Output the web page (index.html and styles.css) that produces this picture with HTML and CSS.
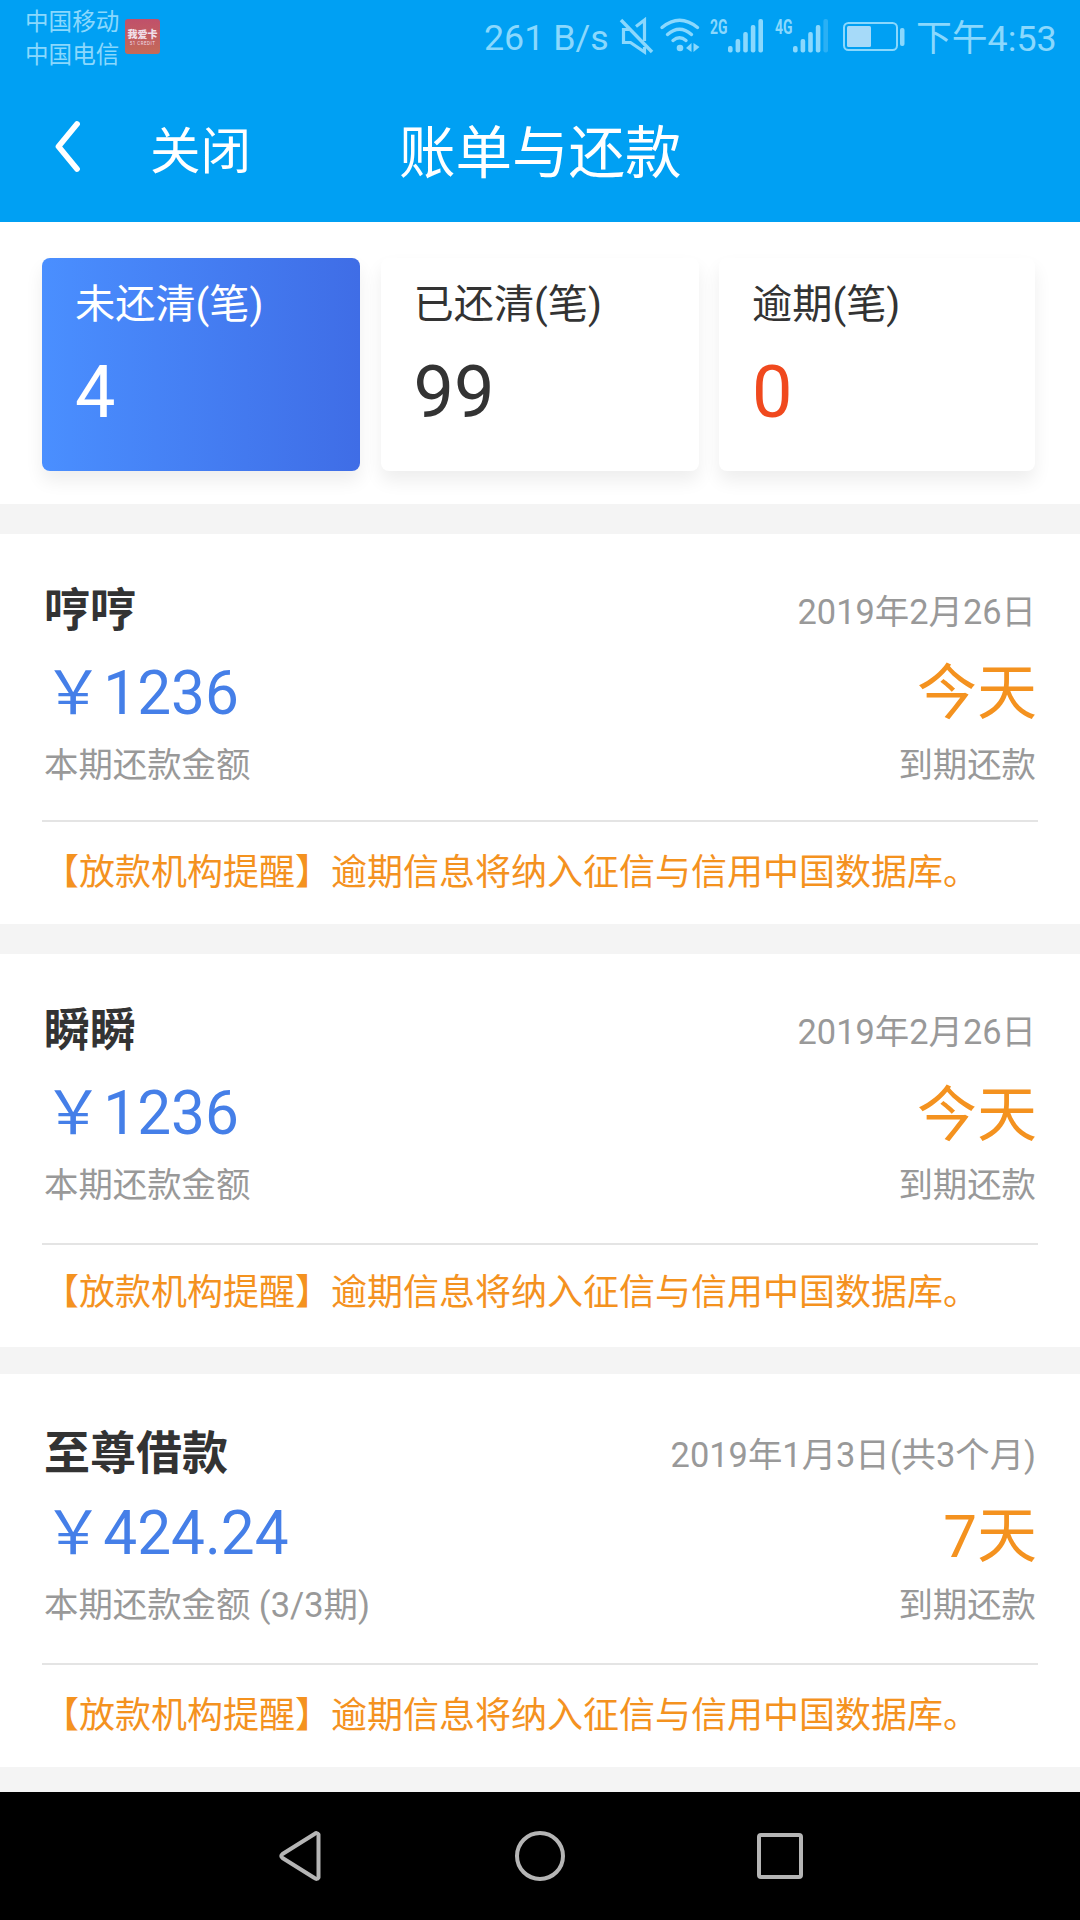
FILE: index.html
```html
<!DOCTYPE html>
<html lang="zh-CN">
<head>
<meta charset="utf-8">
<title>账单与还款</title>
<link rel="stylesheet" href="styles.css">
</head>
<body>
<div class="screen">
  <header class="header">
    <div class="status">
      <div class="carriers"><span>中国移动</span><span>中国电信</span></div>
      <div class="app-badge"><b>我爱卡</b><small>51 CREDIT</small></div>
      <div class="speed">261 B/s</div>
      <svg class="icon-mute" viewBox="0 0 36 38" width="36" height="38" fill="none" stroke="currentColor" stroke-width="3.2">
        <path d="M17 9.500L25.500 3V24M10 12.500H4.500V25.500H11.500L25.500 35V30"/>
        <path d="M2 3L33 35" stroke-width="3.400"/>
      </svg>
      <svg class="icon-wifi" viewBox="0 0 40 36" width="40" height="36" fill="none" stroke="currentColor" stroke-width="3.400" stroke-linecap="round">
        <path d="M2 9.500Q19.500 -5 37.500 9.500"/>
        <path d="M7.500 16.500Q19.500 6 31.500 16.500"/>
        <path d="M13 22.500Q19.500 17 26 22.500"/>
        <circle cx="20" cy="30" r="3.300" fill="currentColor" stroke="none"/>
        <path d="M31.500 25V34L26 30ZM33.500 25L39.500 29L33.500 34Z" fill="currentColor" stroke="none"/>
      </svg>
      <svg class="icon-signal" viewBox="0 0 55 36" width="55" height="36" fill="currentColor">
        <text x="0" y="16" class="net" textLength="17.500" lengthAdjust="spacingAndGlyphs">2G</text>
        <rect x="18" y="28" width="4.600" height="6.500" rx="2"/>
        <rect x="25.600" y="21" width="4.600" height="13.500" rx="2"/>
        <rect x="33.200" y="14" width="4.600" height="20.500" rx="2"/>
        <rect x="40.800" y="7" width="4.600" height="27.500" rx="2"/>
        <rect x="48.400" y="1" width="4.600" height="33.500" rx="2"/>
      </svg>
      <svg class="icon-signal second-sim" viewBox="0 0 55 36" width="55" height="36" fill="currentColor">
        <text x="0" y="16" class="net" textLength="17.500" lengthAdjust="spacingAndGlyphs">4G</text>
        <rect x="18" y="28" width="4.600" height="6.500" rx="2"/>
        <rect x="25.600" y="21" width="4.600" height="13.500" rx="2"/>
        <rect x="33.200" y="14" width="4.600" height="20.500" rx="2"/>
        <rect x="40.800" y="7" width="4.600" height="27.500" rx="2"/>
        <rect x="48.400" y="1" width="4.600" height="33.500" rx="2" opacity=".3"/>
      </svg>
      <svg class="icon-battery" viewBox="0 0 62 30" width="62" height="30" fill="currentColor">
        <rect x="1" y="1" width="53" height="27" rx="4.500" fill="none" stroke="currentColor" stroke-width="2"/>
        <rect x="4" y="4" width="24" height="21" rx="1.500" fill="#a6daf9"/>
        <rect x="57" y="6" width="4.500" height="18" rx="2"/>
      </svg>
      <div class="time">下午4:53</div>
    </div>
    <nav class="titlebar">
      <svg class="back" viewBox="0 0 26 54" width="26" height="54" fill="none" stroke="#fff" stroke-width="5.800" stroke-linecap="round" stroke-linejoin="round"><path d="M22 4L3.500 26.500L22 49"/></svg>
      <span class="close">关闭</span>
      <h1>账单与还款</h1>
    </nav>
  </header>

  <section class="stats">
    <div class="stat active"><span>未还清(笔)</span><strong>4</strong></div>
    <div class="stat"><span>已还清(笔)</span><strong>99</strong></div>
    <div class="stat overdue"><span>逾期(笔)</span><strong>0</strong></div>
  </section>

  <main class="bills">
    <article class="bill first">
      <div class="bill-body">
        <div class="loan"><h2>哼哼</h2><p class="amount">￥1236</p><p class="sub">本期还款金额</p></div>
        <div class="due"><p class="date">2019年2月26日</p><p class="days">今天</p><p class="sub">到期还款</p></div>
      </div>
      <p class="notice">【放款机构提醒】逾期信息将纳入征信与信用中国数据库。</p>
    </article>
    <article class="bill second">
      <div class="bill-body">
        <div class="loan"><h2>瞬瞬</h2><p class="amount">￥1236</p><p class="sub">本期还款金额</p></div>
        <div class="due"><p class="date">2019年2月26日</p><p class="days">今天</p><p class="sub">到期还款</p></div>
      </div>
      <p class="notice">【放款机构提醒】逾期信息将纳入征信与信用中国数据库。</p>
    </article>
    <article class="bill third">
      <div class="bill-body">
        <div class="loan"><h2>至尊借款</h2><p class="amount">￥424.24</p><p class="sub">本期还款金额 (3/3期)</p></div>
        <div class="due"><p class="date">2019年1月3日(共3个月)</p><p class="days">7天</p><p class="sub">到期还款</p></div>
      </div>
      <p class="notice">【放款机构提醒】逾期信息将纳入征信与信用中国数据库。</p>
    </article>
  </main>

  <footer class="navbar">
    <svg viewBox="0 0 52 52" width="52" height="52"><path d="M44.500 4.500V47.500Q43 50 40.500 48L8.500 28Q6 26 8.500 24L40.500 4Q43 2 44.500 4.500Z"/></svg>
    <svg viewBox="0 0 52 52" width="52" height="52"><circle cx="26" cy="26" r="23"/></svg>
    <svg viewBox="0 0 52 52" width="52" height="52"><rect x="5" y="5" width="42" height="42" rx="2"/></svg>
  </footer>
</div>
</body>
</html>
```
FILE: styles.css
```css
* { box-sizing: border-box; }
body {
  margin: 0;
  background: #f4f4f4;
  font-family: Roboto, "Noto Sans CJK SC", sans-serif;
  color: #333;
}
h1, h2, p { margin: 0; font-weight: 400; white-space: nowrap; }
.screen {
  width: 1080px;
  height: 1920px;
  overflow: hidden;
  display: flex;
  flex-direction: column;
}

/* header */
.header { height: 222px; flex: none; background: #00a0f3; color: #fff; }
.status {
  height: 76px;
  padding-left: 25px;
  display: flex;
  align-items: flex-start;
  color: #8ad8fd;
  white-space: nowrap;
}
.status svg { overflow: visible; flex: none; }
.carriers {
  width: 100px;
  padding-top: 6px;
  display: flex;
  flex-direction: column;
  font-size: 23.6px;
  line-height: 33px;
}
.app-badge {
  width: 35px;
  height: 35px;
  margin-top: 19px;
  padding-top: 9px;
  border-radius: 3px;
  background: linear-gradient(#c0506a, #c46a58);
  color: #f0dfe8;
  display: flex;
  flex-direction: column;
  align-items: center;
}
.app-badge b { font-size: 10px; line-height: 13px; font-weight: 900; }
.app-badge small { font-size: 4.5px; line-height: 5px; letter-spacing: .5px; }
.speed { width: 135px; margin-left: 324px; font-size: 35.8px; line-height: 76px; }
.icon-mute { margin-top: 17px; }
.icon-wifi { margin: 18px 0 0 5px; }
.icon-signal { margin: 18px 0 0 10px; }
.icon-signal.second-sim { margin-left: 10px; }
.icon-battery { margin: 22px 0 0 13px; }
.net { font: 700 20px Roboto, sans-serif; }
.time { margin-left: 11px; font-size: 35.8px; line-height: 78px; }
.titlebar { height: 146px; display: flex; align-items: flex-start; }
.back { margin: 44px 0 0 55px; }
.close { width: 249px; margin-left: 69px; font-size: 50.5px; line-height: 60px; padding-top: 46px; }
.titlebar h1 { font-size: 56.5px; line-height: 70px; padding-top: 43px; }

/* summary cards */
.stats {
  height: 282px;
  flex: none;
  padding: 36px 45px 0 42px;
  display: grid;
  grid-template-columns: 318px 318px 316px;
  column-gap: 20.5px;
  background: #fff;
}
.stat {
  height: 213px;
  padding: 21px 33px 0;
  border-radius: 8px;
  background: #fff;
  box-shadow: 0 10px 18px rgba(0, 0, 0, .07);
  display: flex;
  flex-direction: column;
}
.stat span { font-size: 40.2px; line-height: 52px; }
.stat strong { margin-top: 20px; font-size: 72px; line-height: 84px; font-weight: 400; }
.stat.active { background: linear-gradient(90deg, #4a8fff, #3f6de6); color: #fff; }
.stat.overdue strong { color: #f0491e; }

/* bills */
.bills { flex: 1; padding-top: 30px; display: flex; flex-direction: column; }
.bill { flex: none; padding: 0 42px; background: #fff; display: flex; flex-direction: column; }
.bill.first { height: 390px; margin-bottom: 30px; }
.bill.second { height: 393px; margin-bottom: 27px; }
.bill.third { height: 393px; }
.bill-body {
  height: 288px;
  flex: none;
  display: flex;
  justify-content: space-between;
  border-bottom: 2px solid #e4e4e4;
}
.second .bill-body, .third .bill-body { height: 291px; }
.loan { padding: 51px 0 0 2px; }
.due { padding: 53px 2px 0 0; text-align: right; }
.loan h2 { font-size: 46px; line-height: 50px; font-weight: 700; }
.amount { margin: 29px 0 0 -1px; font-size: 60.3px; line-height: 60px; color: #457fe8; }
.sub { margin-top: 23px; font-size: 34.4px; line-height: 36px; color: #999; }
.date { font-size: 34.4px; line-height: 50px; color: #999; }
.days { margin: 27px -1px 0 0; font-size: 60px; line-height: 60px; color: #f4921f; }
.due .sub { margin-top: 23px; }
.second .days { margin-top: 29px; }
.second .due .sub { margin-top: 21px; }
.third .loan { padding-top: 54px; }
.third .amount { margin-top: 26px; }
.third .due { padding-top: 56px; }
.third .due .sub { margin-top: 20px; }
.notice { padding-left: 1px; font-size: 36px; line-height: 103px; color: #f4921f; }
.second .notice { line-height: 97px; }
.third .notice { line-height: 103px; }

/* system navigation */
.navbar {
  height: 128px;
  flex: none;
  background: #000;
  display: flex;
  justify-content: center;
  align-items: center;
  gap: 188px;
}
.navbar svg { fill: none; stroke: #b5b5b5; stroke-width: 4; stroke-linejoin: round; }
```
